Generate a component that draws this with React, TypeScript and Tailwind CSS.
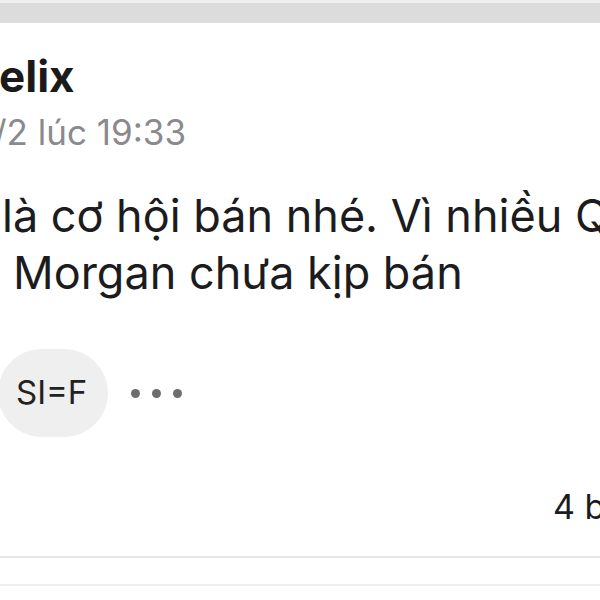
import React from "react";

export default function App() {
  const font = { fontFamily: "Inter, 'Noto Sans', sans-serif" };
  return (
    <div
      className="w-[600px] h-[600px] overflow-hidden bg-white flex flex-col"
      style={font}
    >
      <div className="h-[3px] bg-[#efefef] shrink-0" />
      <div className="h-[20px] bg-[#dcdcdc] shrink-0" />

      <div className="mt-[31px] text-[44px] leading-[44px] font-bold text-[#1a1a1a] whitespace-nowrap -ml-[1px]">
        elix
      </div>

      <div className="mt-[17px] text-[35px] leading-[35px] text-[#8a8a8e] whitespace-nowrap -ml-[6px]">
        /2 lúc 19:33
      </div>

      <div className="mt-[37px] text-[45px] leading-[57px] text-[#1c1c1e] whitespace-nowrap overflow-hidden">
        <div className="ml-[2px]">là cơ hội bán nhé. Vì nhiều Quỹ</div>
        <div className="ml-[13px]">Morgan chưa kịp bán</div>
      </div>

      <div className="mt-[48px] flex items-center">
        <div className="-ml-[2px] h-[88px] w-[110px] rounded-full bg-[#efefef] flex items-center pl-[18px] text-[33px] text-[#222] whitespace-nowrap">
          SI=F
        </div>
        <div className="ml-[23px] flex items-center gap-[12px]">
          <span className="w-[9px] h-[9px] rounded-full bg-[#6d6d6d]" />
          <span className="w-[9px] h-[9px] rounded-full bg-[#6d6d6d]" />
          <span className="w-[9px] h-[9px] rounded-full bg-[#6d6d6d]" />
        </div>
      </div>

      <div className="mt-[53px] text-[34px] leading-[34px] text-[#1c1c1e] whitespace-nowrap overflow-hidden pl-[553px]">
        4 bình luận
      </div>

      <div className="mt-[32px] h-[2px] bg-[#e8e8e8] shrink-0" />
      <div className="mt-[26px] h-[2px] bg-[#f0f0f0] shrink-0" />
    </div>
  );
}
